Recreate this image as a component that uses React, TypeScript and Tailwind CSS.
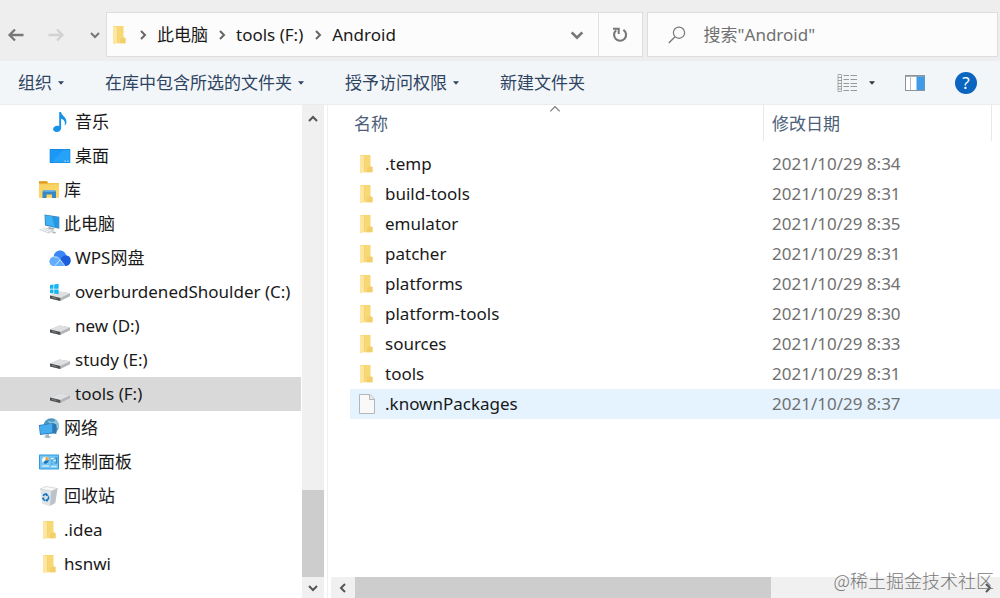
import type { ReactNode } from "react";

type IconProps = { className?: string };

const FolderIcon = ({ className = "h-5 w-4" }: IconProps) => (
  <svg viewBox="0 0 16 20" className={className} aria-hidden="true">
    <path d="M2 1H12.5V12.5L14.5 13V18.2H3L2 18Z" fill="#f8d775" />
    <path d="M12.5 12.5L14.5 13V18.2H9V14Z" fill="#f3cf6c" />
    <path d="M2 1L6.5 2.5V17.5L3.5 19.3L2 18.8Z" fill="#fde6a2" />
    <path d="M6.5 2.5V17.5" stroke="#f5cd68" strokeWidth=".7" />
  </svg>
);

const FileIcon = () => (
  <svg viewBox="0 0 18 22" className="h-[22px] w-[18px]" aria-hidden="true">
    <path d="M1.5 1.5H12L16.5 6V20.5H1.5Z" fill="#f9f9f9" stroke="#b3b7ba" />
    <path d="M11.5 1.5V6.5H16.5" fill="#e6e8e9" stroke="#b3b7ba" />
  </svg>
);

const MusicIcon = () => (
  <svg viewBox="0 0 22 22" className="size-[22px]" aria-hidden="true">
    <path
      d="M10.2 1H12C12.3 4.8 18.5 6.2 17.3 12.6C16.9 13.6 16 14.3 15.5 14.4C16.9 10.6 14.5 8.3 12.1 7.4V17C12.1 19.6 9.9 21 7.7 21C5.5 21 4.1 19.7 4.1 18.1C4.1 16.2 6.2 14.7 8.3 14.7C9.1 14.7 9.7 14.9 10.2 15.1Z"
      fill="#1591e8"
    />
  </svg>
);

const DesktopIcon = () => (
  <svg viewBox="0 0 22 22" className="size-[22px]" aria-hidden="true">
    <rect x=".7" y="4" width="20.6" height="14" rx=".8" fill="#0f86e2" />
    <rect x="1.4" y="4.7" width="19.2" height="12.6" fill="#1b98f5" />
    <path d="M14.5 4.7H20.6V17.3H3Z" fill="#28a1f8" />
    <path d="M15 16.2H20" stroke="#9ad2fa" strokeWidth="1" strokeDasharray="2 1" />
  </svg>
);

const LibraryIcon = () => (
  <svg viewBox="0 0 22 22" className="size-[22px]" aria-hidden="true">
    <path d="M1 2.2H9L10.5 4H21V18.5H1Z" fill="#f5c64e" />
    <path d="M1 2.2H9L9.8 4.5H1Z" fill="#dc9d22" />
    <path d="M1 5.5H21V18.5H1Z" fill="#fbd466" />
    <path d="M4.5 19V12.5L6 11H16.5L18 12.5V19H14V15.5H8.5V19Z" fill="#3588c4" />
    <path d="M5 12.8L6.5 11H16L17.5 12.8Z" fill="#66b5e5" />
  </svg>
);

const ComputerIcon = () => (
  <svg viewBox="0 0 22 22" className="size-[22px]" aria-hidden="true">
    <path d="M6.5 1.4L21.3 3.8V15.8L7 12.5Z" fill="#3b83bd" />
    <path d="M7.2 2.3L20.4 4.5V14.8L7.9 11.8Z" fill="#40b2f4" />
    <path d="M14 3.4L20.4 4.5V14.8L16.5 13.9Z" fill="#2498e5" />
    <path d="M11 14L17 15.2L14.5 17L9 15.8Z" fill="#a6b0b6" />
    <path d="M.6 16.8L7.5 14.6L17 17.7L10.5 20.6Z" fill="#cfd4d7" />
    <path d="M3 17L8 15.4M5.5 18L10.5 16.2M8 19L13.3 17" stroke="#fff" strokeWidth=".9" />
    <path d="M15.5 18.4L18.5 19.3L16.5 20.7L13.7 19.7Z" fill="#b5bcc0" />
  </svg>
);

const CloudIcon = () => (
  <svg viewBox="0 0 22 22" className="size-[22px]" aria-hidden="true">
    <path d="M5 19C2.4 19 .6 17.1 .6 14.6C.6 12.2 2.2 10.4 4.6 10C4.8 6.2 7.5 3.4 11 3.4C14.3 3.4 16.6 5.4 17.3 8.5C20 8.8 21.6 10.8 21.6 13.5C21.6 16.8 19.2 19 16 19Z" fill="#3a88f4" />
    <path d="M4.6 10C8 9.3 9.6 11 11.5 13.4L16 19H5C2.4 19 .6 17.1 .6 14.6C.6 12.2 2.2 10.4 4.6 10Z" fill="#62adfd" />
    <path d="M17.3 8.5C14.5 8.1 12.5 9.6 11.1 12.9L16 19C19.2 19 21.6 16.8 21.6 13.5C21.6 10.8 20 8.8 17.3 8.5Z" fill="#1c5fdc" />
    <path d="M6 18.7L11.2 12.8L15.8 18.7M4.8 10C8 9.3 9.6 10.8 11.2 12.8" fill="none" stroke="#d8ebff" strokeWidth=".9" />
  </svg>
);

const DriveIcon = ({ system = false }: { system?: boolean }) => (
  <svg viewBox="0 0 22 22" className="size-[22px]" aria-hidden="true">
    <path d="M1 14.5L10.5 10.4L21 12.2V15.3L11.3 20L1 17.4Z" fill="#b3b5b6" />
    <path d="M1 14.5L10.5 10.4L21 12.2L11.3 16.9Z" fill="#dfe0e1" />
    <path d="M1 14.5L11.3 16.9V20L1 17.4Z" fill="#4d4f50" />
    <path d="M3 16.4L7.5 17.5" stroke="#8c9091" strokeWidth=".8" />
    {system && (
      <path d="M1 4.1L4.5 3.5V7.7H1ZM5.2 3.4L9.6 2.7V7.7H5.2ZM1 8.4H4.5V12.5L1 11.9ZM5.2 8.4H9.6V13.3L5.2 12.6Z" fill="#16b4f1" />
    )}
  </svg>
);

const NetworkIcon = () => (
  <svg viewBox="0 0 22 22" className="size-[22px]" aria-hidden="true">
    <circle cx="13.2" cy="9" r="7.7" fill="#4b96c1" />
    <path d="M9 2.8C11 4.6 13 5 16 4.5L18 2.8C21 5.4 22 9 20.2 12L17.5 9L12 7Z" fill="#8fc6de" />
    <path d="M.8 8L15 5.9V16.2L2 18Z" fill="#2b7fc3" />
    <path d="M1.6 8.7L14.2 6.8V15.5L2.7 17.1Z" fill="#45acef" />
    <path d="M15 5.9L18.4 7.5V17L15 16.2Z" fill="#2f78ae" />
    <path d="M7.5 17.4L11 16.9V19L13.5 19.7L10.4 21.2L5.3 20L7.5 19.2Z" fill="#a1b7c4" />
  </svg>
);

const ControlIcon = () => (
  <svg viewBox="0 0 22 22" className="size-[22px]" aria-hidden="true">
    <rect x="1" y="3.5" width="20" height="15" rx=".8" fill="#2f9ade" />
    <rect x="2" y="4.5" width="18" height="13" fill="#72c5f3" />
    <circle cx="7.5" cy="9.3" r="3.5" fill="#f3fbff" />
    <path d="M7.5 9.3V5.8A3.5 3.5 0 0 1 11 9.3Z" fill="#f5a534" />
    <path d="M7.5 9.3H11A3.5 3.5 0 0 1 5 11.8Z" fill="#1878bf" />
    <path d="M13 10H14.5M13 13H14.5M17 7H18.7V12H16.5" stroke="#2f80bd" strokeWidth="1.1" fill="none" />
    <path d="M13 7.5H15.5M15.8 9.5H17.5" stroke="#e9f8ff" strokeWidth="1.2" />
    <path d="M4 15H11M13 15.5H18.5" stroke="#c9ebfc" strokeWidth="1.3" />
  </svg>
);

const BinIcon = () => (
  <svg viewBox="0 0 22 22" className="size-[22px]" aria-hidden="true">
    <path d="M2.2 4L8 1.5L19.5 3.5L17.2 18L11 21L4.3 18.8Z" fill="#dfe4e7" />
    <path d="M13.2 6L19.5 3.5L17.2 18L12 21Z" fill="#bbc3c8" />
    <path d="M2.2 4L8 1.5L19.5 3.5L13.2 6Z" fill="#f8f9f9" stroke="#c4cacd" strokeWidth=".6" />
    <path d="M5.3 11C5.7 9.3 7.5 8.7 9 9.6M10.3 11.4C11 13 10.2 14.9 8.8 15.4M7 15.4C5.8 15 5 14 5 12.8" fill="none" stroke="#1675c4" strokeWidth="1.6" />
    <path d="M8 8L10.8 10.4L7.7 11.2ZM9.4 13.5V17L6.9 15.3ZM3.6 13L6.7 12.4L5.4 14.8Z" fill="#1675c4" />
  </svg>
);

const Arrow = ({ flip = false, color }: { flip?: boolean; color: string }) => (
  <svg viewBox="0 0 18 16" className={flip ? "h-4 w-[18px] rotate-180" : "h-4 w-[18px]"} aria-hidden="true">
    <path d="M8 2.5L2.5 8L8 13.5M2.5 8H16.5" fill="none" stroke={color} strokeWidth="2.3" />
  </svg>
);

const chevrons = {
  up: "M2 8L6 4L10 8",
  down: "M2 4L6 8L10 4",
  left: "M8 2L4 6L8 10",
  right: "M4 2L8 6L4 10",
};

const Chevron = ({ dir, className = "size-3", width = 2 }: IconProps & { dir: keyof typeof chevrons; width?: number }) => (
  <svg viewBox="0 0 12 12" className={className} aria-hidden="true">
    <path d={chevrons[dir]} fill="none" stroke="currentColor" strokeWidth={width} />
  </svg>
);

const Caret = () => (
  <svg viewBox="0 0 6 4" className="h-1 w-1.5" aria-hidden="true">
    <path d="M0 .3H6L3 3.7Z" fill="currentColor" />
  </svg>
);

type TreeItem = { label: string; icon: ReactNode; nested?: boolean; selected?: boolean };

const tree: TreeItem[] = [
  { label: "音乐", icon: <MusicIcon />, nested: true },
  { label: "桌面", icon: <DesktopIcon />, nested: true },
  { label: "库", icon: <LibraryIcon /> },
  { label: "此电脑", icon: <ComputerIcon /> },
  { label: "WPS网盘", icon: <CloudIcon />, nested: true },
  { label: "overburdenedShoulder (C:)", icon: <DriveIcon system />, nested: true },
  { label: "new (D:)", icon: <DriveIcon />, nested: true },
  { label: "study (E:)", icon: <DriveIcon />, nested: true },
  { label: "tools (F:)", icon: <DriveIcon />, nested: true, selected: true },
  { label: "网络", icon: <NetworkIcon /> },
  { label: "控制面板", icon: <ControlIcon /> },
  { label: "回收站", icon: <BinIcon /> },
  { label: ".idea", icon: <FolderIcon className="h-5 w-[18px]" /> },
  { label: "hsnwi", icon: <FolderIcon className="h-5 w-[18px]" /> },
];

const files = [
  { name: ".temp", date: "2021/10/29 8:34" },
  { name: "build-tools", date: "2021/10/29 8:31" },
  { name: "emulator", date: "2021/10/29 8:35" },
  { name: "patcher", date: "2021/10/29 8:31" },
  { name: "platforms", date: "2021/10/29 8:34" },
  { name: "platform-tools", date: "2021/10/29 8:30" },
  { name: "sources", date: "2021/10/29 8:33" },
  { name: "tools", date: "2021/10/29 8:31" },
  { name: ".knownPackages", date: "2021/10/29 8:37", file: true },
];

function AddressBar() {
  return (
    <header className="flex h-[61px] shrink-0 items-start bg-[#eeeeee] pt-3">
      <nav aria-label="历史记录" className="flex h-[45px] w-[106px] shrink-0 items-center pl-[7px]">
        <button aria-label="后退" className="w-10"><Arrow color="#777777" /></button>
        <button aria-label="前进" className="w-10"><Arrow flip color="#d2d2d2" /></button>
        <button aria-label="最近浏览的位置" className="ml-0.5 text-[#777777]"><Chevron dir="down" /></button>
      </nav>
      <div className="flex h-[45px] flex-[537] items-center border border-[#dddddd] bg-[#fcfcfc]">
        <div className="flex flex-1 items-center gap-2 text-[#191919]">
          <span className="ml-1 w-[18px]"><FolderIcon /></span>
          <Chevron dir="right" className="size-3 text-[#666666]" />
          <button>此电脑</button>
          <Chevron dir="right" className="size-3 text-[#666666]" />
          <button>tools (F:)</button>
          <Chevron dir="right" className="ml-px size-3 text-[#666666]" />
          <button>Android</button>
        </div>
        <button aria-label="展开地址" className="flex w-[42px] justify-center text-[#777777]">
          <Chevron dir="down" className="size-4" />
        </button>
        <button aria-label="刷新" className="flex h-full w-11 items-center justify-center border-l border-[#e2e2e2]">
          <svg viewBox="0 0 16 16" className="size-4" aria-hidden="true">
            <path d="M4.2 3.2A6 6 0 1 0 11.4 2.8" fill="none" stroke="#777777" strokeWidth="2.1" />
            <path d="M1 1.8H6.7V7" fill="none" stroke="#777777" strokeWidth="2" />
          </svg>
        </button>
      </div>
      <label className="ml-1 mr-0.5 flex h-[45px] flex-[351] items-center border border-[#dddddd] bg-[#fcfcfc]">
        <svg viewBox="0 0 18 18" className="ml-5 size-[18px] shrink-0" aria-hidden="true">
          <circle cx="11" cy="6.7" r="5.6" fill="none" stroke="#777777" strokeWidth="1.2" />
          <path d="M7 10.8L.8 17" stroke="#777777" strokeWidth="1.3" />
        </svg>
        <input
          aria-label="搜索"
          placeholder={'搜索"Android"'}
          className="ml-[18px] w-full min-w-0 bg-transparent outline-none placeholder:text-[#707070]"
        />
      </label>
    </header>
  );
}

function Toolbar() {
  return (
    <div className="flex h-11 shrink-0 items-center border-b border-[#e9edef] bg-[#f3f6f8] pl-[18px] pr-[23px] text-[#2d4463]">
      <button className="mr-[41px] flex items-center gap-1.5">组织<Caret /></button>
      <button className="mr-[41px] flex items-center gap-1.5">在库中包含所选的文件夹<Caret /></button>
      <button className="mr-[41px] flex items-center gap-1.5">授予访问权限<Caret /></button>
      <button>新建文件夹</button>
      <div className="ml-auto flex items-center">
        <button aria-label="更改视图" className="flex items-center gap-3 text-[#333333]">
          <svg viewBox="0 0 20 20" className="size-5" aria-hidden="true">
            <path d="M1 1.5H4.5V18.5H1Z" fill="#f8f8f8" stroke="#aaaaaa" />
            <path d="M1 4.5H4.5M1 7.5H4.5M1 10.5H4.5M1 13.5H4.5M1 16H4.5" stroke="#9b9b9b" />
            <path d="M6.5 2.5H12M13.5 2.5H20M6.5 6.5H12M13.5 6.5H20M6.5 10.5H12M13.5 10.5H20M6.5 13.5H12M13.5 13.5H20M6.5 17.5H12M13.5 17.5H20" stroke="#999999" strokeWidth="1" />
          </svg>
          <Caret />
        </button>
        <button aria-label="预览窗格" className="ml-[30px]">
          <svg viewBox="0 0 20 16" className="h-4 w-5" aria-hidden="true">
            <rect x=".5" y=".5" width="19" height="15" fill="#fff" stroke="#8b949a" />
            <path d="M.5 1H19.5" stroke="#8b949a" strokeWidth="1.5" />
            <path d="M5.5 1V15" stroke="#b7bdc1" />
            <rect x="11.5" y="1.5" width="8" height="13.5" fill="#3f9be5" />
          </svg>
        </button>
        <button
          aria-label="帮助"
          className="ml-[30px] flex size-[22px] items-center justify-center rounded-full bg-[#0965c0] text-white"
        >
          ?
        </button>
      </div>
    </div>
  );
}

function Sidebar() {
  return (
    <aside className="flex min-h-0 w-[324px] shrink-0">
      <ul className="min-w-0 flex-1 overflow-hidden">
        {tree.map((item) => (
          <li key={item.label}>
            <button
              aria-current={item.selected}
              className={`flex h-[34px] w-full items-center gap-1 whitespace-nowrap text-[#191919] ${
                item.nested ? "pl-[49px]" : "pl-[38px]"
              } ${item.selected ? "bg-[#d9d9d9]" : ""}`}
            >
              <span className="flex w-[22px] shrink-0 justify-center">{item.icon}</span>
              {item.label}
            </button>
          </li>
        ))}
      </ul>
      <div className="ml-px flex w-[22px] flex-col bg-[#f0f0f0] text-[#555555]">
        <button aria-label="向上滚动" className="flex h-7 items-center justify-center"><Chevron dir="up" /></button>
        <div className="flex-[357]" />
        <div className="flex-[87] bg-[#cdcdcd]" />
        <button aria-label="向下滚动" className="flex h-[21px] items-center justify-center"><Chevron dir="down" /></button>
      </div>
    </aside>
  );
}

function FileList() {
  return (
    <main className="ml-[3px] flex min-w-0 flex-1 flex-col border-l border-[#f0f0f0]">
      <div className="relative flex-1 overflow-hidden pl-[22px]">
        <Chevron dir="up" width={1} className="absolute left-[220px] top-[-3px] size-3.5 text-[#777777]" />
        <table className="w-full table-fixed border-separate border-spacing-0 text-left">
          <colgroup>
            <col className="w-[414px]" />
            <col />
            <col className="w-2" />
          </colgroup>
          <thead>
            <tr className="h-9 text-[#4c607a]">
              <th className="border-r border-[#e8e8e8] pb-0 pl-1 pt-0.5 font-normal">名称</th>
              <th className="border-r border-[#e8e8e8] pb-0 pl-2 pt-0.5 font-normal">修改日期</th>
              <th />
            </tr>
          </thead>
          <tbody>
            <tr className="h-2"><td colSpan={3} className="p-0" /></tr>
            {files.map((f) => (
              <tr key={f.name} className={f.file ? "h-[30px] bg-[#e5f3ff]" : "h-[30px]"}>
                <td className="p-0">
                  <div className="flex items-center pl-2">
                    <span className="w-[27px] shrink-0">{f.file ? <FileIcon /> : <FolderIcon />}</span>
                    <span className="text-[#191919]">{f.name}</span>
                  </div>
                </td>
                <td className="py-0 pl-2 text-[#707070]">{f.date}</td>
                <td className="p-0" />
              </tr>
            ))}
          </tbody>
        </table>
      </div>
      <div className="ml-[3px] flex h-[21px] shrink-0 bg-[#f0f0f0] text-[#555555]">
        <button aria-label="向左滚动" className="flex w-6 items-center justify-center"><Chevron dir="left" /></button>
        <div className="flex-[416] bg-[#cdcdcd]" />
        <div className="flex-[204]" />
        <button aria-label="向右滚动" className="flex w-[25px] items-center justify-center"><Chevron dir="right" /></button>
      </div>
    </main>
  );
}

export default function App() {
  return (
    <div className="relative flex h-screen flex-col overflow-hidden bg-white font-['Noto_Sans','Noto_Sans_CJK_SC',sans-serif] text-[17px] leading-6">
      <AddressBar />
      <Toolbar />
      <div className="flex min-h-0 flex-1">
        <Sidebar />
        <FileList />
      </div>
      <div className="pointer-events-none absolute bottom-1.5 right-1.5 font-['Noto_Sans_CJK_SC',sans-serif] text-lg leading-6 font-light text-[#777777]">
        @稀土掘金技术社区
      </div>
    </div>
  );
}
